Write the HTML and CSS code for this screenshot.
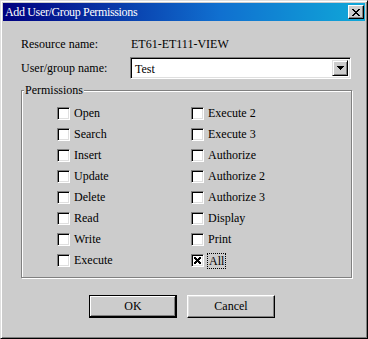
FILE: index.html
```html
<!DOCTYPE html>
<html lang="en">
<head>
  <meta charset="UTF-8"/>
  <title>Add User/Group Permissions</title>
  <link rel="stylesheet" href="styles.css">
</head>
<body>
  <div class="window">
    <div class="titlebar">
      <span class="title">Add User/Group Permissions</span>
      <button class="close" aria-label="Close">
        <svg width="8" height="7" viewBox="0 0 8 7" shape-rendering="crispEdges">
          <rect x="0" y="0" width="2" height="1"/><rect x="6" y="0" width="2" height="1"/>
          <rect x="1" y="1" width="2" height="1"/><rect x="5" y="1" width="2" height="1"/>
          <rect x="2" y="2" width="4" height="1"/>
          <rect x="3" y="3" width="2" height="1"/>
          <rect x="2" y="4" width="4" height="1"/>
          <rect x="1" y="5" width="2" height="1"/><rect x="5" y="5" width="2" height="1"/>
          <rect x="0" y="6" width="2" height="1"/><rect x="6" y="6" width="2" height="1"/>
        </svg>
      </button>
    </div>

    <div class="content">
      <div class="field">
        <span class="field-label">Resource name:</span>
        <span class="field-value">ET61-ET111-VIEW</span>
      </div>
      <div class="field">
        <span class="field-label">User/group name:</span>
        <div class="combo">
          <span class="combo-text">Test</span>
          <span class="combo-btn">
            <svg width="7" height="4" viewBox="0 0 7 4" shape-rendering="crispEdges">
              <rect x="0" y="0" width="7" height="1"/>
              <rect x="1" y="1" width="5" height="1"/>
              <rect x="2" y="2" width="3" height="1"/>
              <rect x="3" y="3" width="1" height="1"/>
            </svg>
          </span>
        </div>
      </div>

      <fieldset class="group">
        <legend>Permissions</legend>
        <div class="perm-grid">
          <div class="perm"><span class="check"></span>Open</div>
          <div class="perm"><span class="check"></span>Search</div>
          <div class="perm"><span class="check"></span>Insert</div>
          <div class="perm"><span class="check"></span>Update</div>
          <div class="perm"><span class="check"></span>Delete</div>
          <div class="perm"><span class="check"></span>Read</div>
          <div class="perm"><span class="check"></span>Write</div>
          <div class="perm"><span class="check"></span>Execute</div>
          <div class="perm"><span class="check"></span>Execute 2</div>
          <div class="perm"><span class="check"></span>Execute 3</div>
          <div class="perm"><span class="check"></span>Authorize</div>
          <div class="perm"><span class="check"></span>Authorize 2</div>
          <div class="perm"><span class="check"></span>Authorize 3</div>
          <div class="perm"><span class="check"></span>Display</div>
          <div class="perm"><span class="check"></span>Print</div>
          <div class="perm">
            <span class="check">
              <svg width="7" height="7" viewBox="0 0 7 7" shape-rendering="crispEdges">
                <rect x="0" y="0" width="2" height="1"/><rect x="5" y="0" width="2" height="1"/>
                <rect x="0" y="1" width="3" height="1"/><rect x="4" y="1" width="3" height="1"/>
                <rect x="1" y="2" width="5" height="1"/>
                <rect x="2" y="3" width="3" height="1"/>
                <rect x="1" y="4" width="5" height="1"/>
                <rect x="0" y="5" width="3" height="1"/><rect x="4" y="5" width="3" height="1"/>
                <rect x="0" y="6" width="2" height="1"/><rect x="5" y="6" width="2" height="1"/>
              </svg>
            </span>
            <span class="focus">All</span>
          </div>
        </div>
      </fieldset>

      <div class="actions">
        <button class="btn default">OK</button>
        <button class="btn">Cancel</button>
      </div>
    </div>
  </div>
</body>
</html>
```

FILE: styles.css
```css
body {
  margin: 0;
  font-family: "Liberation Serif", serif;
  font-size: 12px;
  color: #000;
}

.window {
  width: 368px;
  height: 339px;
  box-sizing: border-box;
  background: #cccccc;
  border: 1px solid;
  border-color: #dfdfdf #000 #000 #dfdfdf;
  box-shadow: inset 1px 1px #fff, inset -1px -1px #808080;
  padding: 2px;
}

/* Title bar */
.titlebar {
  height: 18px;
  display: flex;
  align-items: center;
  justify-content: space-between;
  padding: 0 1px 0 2px;
  background: linear-gradient(to right, #000080, #1070d0 60%, #10a8d8);
  color: #fff;
}

.title {
  font-size: 12px;
  line-height: 18px;
  letter-spacing: -0.35px;
}

.close {
  width: 16px;
  height: 14px;
  box-sizing: border-box;
  padding: 0;
  display: flex;
  align-items: center;
  justify-content: center;
  background: #cccccc;
  border: 1px solid;
  border-color: #fff #000 #000 #fff;
  box-shadow: inset -1px -1px #808080;
}

/* Form */
.content {
  padding: 0 13px 0 18px;
}

.field {
  display: grid;
  grid-template-columns: 109px 221px;
  align-items: center;
  height: 22px;
  margin-top: 2px;
}

.field:first-child {
  margin-top: 12px;
}

.field-value {
  padding-left: 1px;
}

.combo {
  height: 22px;
  box-sizing: border-box;
  display: flex;
  align-items: stretch;
  background: #fff;
  border: 1px solid;
  border-color: #808080 #fff #fff #808080;
  box-shadow: inset 1px 1px #000, inset -1px -1px #dfdfdf;
  padding: 2px 2px 2px 1px;
}

.combo-text {
  flex: 1;
  padding-left: 3px;
  line-height: 18px;
}

.combo-btn {
  width: 16px;
  box-sizing: border-box;
  display: flex;
  align-items: center;
  justify-content: center;
  background: #cccccc;
  border: 1px solid;
  border-color: #dfdfdf #000 #000 #dfdfdf;
  box-shadow: inset 1px 1px #fff, inset -1px -1px #808080;
}

/* Permissions group */
.group {
  margin: 4px 0 0;
  padding: 6px 0 6px 2px;
  border: 1px solid #808080;
  box-shadow: inset 1px 1px #fff, 1px 1px #fff;
}

.group legend {
  padding: 0 1px;
  line-height: 14px;
  background: #cccccc;
}

.perm-grid {
  display: grid;
  grid-template-columns: 134px 1fr;
  grid-template-rows: repeat(8, 21px);
  grid-auto-flow: column;
  padding-left: 33px;
}

.perm {
  display: flex;
  align-items: center;
  gap: 4px;
}

.check {
  width: 13px;
  height: 13px;
  box-sizing: border-box;
  display: flex;
  align-items: center;
  justify-content: center;
  background: #fff;
  border: 1px solid;
  border-color: #808080 #fff #fff #808080;
  box-shadow: inset 1px 1px #000, inset -1px -1px #dfdfdf;
}

.focus {
  border: 1px dotted #000;
  padding: 0 1px;
  line-height: 14px;
  margin-left: -1px;
}

/* Buttons */
.actions {
  display: flex;
  justify-content: center;
  gap: 10px;
  margin-top: 17px;
  padding-right: 9px;
}

.btn {
  width: 88px;
  height: 23px;
  box-sizing: border-box;
  padding: 0;
  font-family: "Liberation Serif", serif;
  font-size: 12px;
  color: #000;
  background: #cccccc;
  border: 1px solid;
  border-color: #fff #000 #000 #fff;
  box-shadow: inset -1px -1px #808080, inset 1px 1px #dfdfdf;
}

.btn.default {
  border-color: #000;
  box-shadow: inset -1px -1px #000, inset 1px 1px #fff, inset -2px -2px #808080;
}
```
